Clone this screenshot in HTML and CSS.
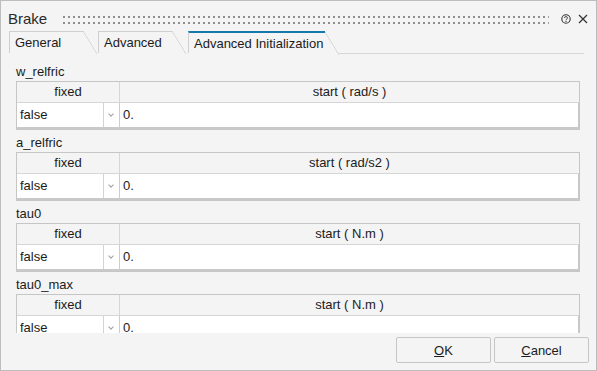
FILE: index.html
```html
<!DOCTYPE html>
<html>
<head lang="en">
<meta charset="UTF-8">
<title>Brake</title>
<link rel="stylesheet" href="styles.css">
</head>
<body>
<div class="dialog">
  <div class="titlebar">
    <span class="title">Brake</span>
    <svg class="grip" height="8">
      <defs>
        <pattern id="dots" width="5" height="6" patternUnits="userSpaceOnUse">
          <rect width="2" height="2" fill="#8e8e8e"/>
        </pattern>
      </defs>
      <rect width="100%" height="8" fill="url(#dots)"/>
    </svg>
    <svg class="help" width="10" height="10" viewBox="0 0 10 10">
      <circle cx="5" cy="5" r="4.2" fill="none" stroke="#333" stroke-width="1.1"/>
      <path d="M3.6 4 a1.4 1.4 0 1 1 2 1.2 c-0.5 0.3 -0.6 0.5 -0.6 1" fill="none" stroke="#333" stroke-width="1"/>
      <circle cx="5" cy="7.4" r="0.6" fill="#333"/>
    </svg>
    <svg class="close" width="10" height="10" viewBox="0 0 10 10">
      <path d="M1 1 L9 9 M9 1 L1 9" stroke="#333" stroke-width="1.2"/>
    </svg>
  </div>

  <div class="tabs">
    <span class="tab">General</span>
    <span class="tab">Advanced</span>
    <span class="tab active">Advanced Initialization</span>
    <span class="tab-fill"></span>
  </div>

  <div class="content">
    <div class="param">
      <div class="param-name">w_relfric</div>
      <div class="param-table">
        <div class="head">fixed</div>
        <div class="head">start ( rad/s )</div>
        <div class="cell select"><span class="value">false</span><span class="arrow"></span></div>
        <div class="cell input">0.</div>
      </div>
    </div>
    <div class="param">
      <div class="param-name">a_relfric</div>
      <div class="param-table">
        <div class="head">fixed</div>
        <div class="head">start ( rad/s2 )</div>
        <div class="cell select"><span class="value">false</span><span class="arrow"></span></div>
        <div class="cell input">0.</div>
      </div>
    </div>
    <div class="param">
      <div class="param-name">tau0</div>
      <div class="param-table">
        <div class="head">fixed</div>
        <div class="head">start ( N.m )</div>
        <div class="cell select"><span class="value">false</span><span class="arrow"></span></div>
        <div class="cell input">0.</div>
      </div>
    </div>
    <div class="param">
      <div class="param-name">tau0_max</div>
      <div class="param-table">
        <div class="head">fixed</div>
        <div class="head">start ( N.m )</div>
        <div class="cell select"><span class="value">false</span><span class="arrow"></span></div>
        <div class="cell input">0.</div>
      </div>
    </div>
  </div>

  <div class="footer">
    <button class="btn"><u>O</u>K</button>
    <button class="btn"><u>C</u>ancel</button>
  </div>
</div>
</body>
</html>
```

FILE: styles.css
```css
body {
  margin: 0;
  font-family: "Liberation Sans", Arial, sans-serif;
  font-size: 13px;
  color: #1b1b1b;
}

.dialog {
  width: 597px;
  height: 371px;
  box-sizing: border-box;
  border: 1px solid #bdbdbd;
  background-color: #f4f4f4;
  display: flex;
  flex-direction: column;
  overflow: hidden;
}

/* title bar */
.titlebar {
  height: 30px;
  box-sizing: border-box;
  padding: 5px 8px 0 7px;
  display: flex;
  align-items: center;
}

.title {
  font-size: 15px;
  color: #2a2a2a;
}

.grip {
  flex: 1;
  margin: 0 12px 0 16px;
  position: relative;
  top: 1px;
}

.help {
  margin-right: 7px;
}

/* tabs */
.tabs {
  height: 23px;
  display: flex;
  padding-left: 8px;
}

.tab {
  position: relative;
  height: 22px;
  line-height: 22px;
  min-width: 74px;
  box-sizing: border-box;
  padding: 0 2px 0 5px;
  margin-right: 15px;
  border-top: 1px solid #cfcfcf;
  border-left: 1px solid #cfcfcf;
  color: #1b1b1b;
}

.tab::after {
  content: "";
  position: absolute;
  top: -1px;
  right: -14px;
  width: 14px;
  height: 23px;
  background: linear-gradient(to top right, transparent calc(50% - 0.6px), #cdcdcd 50%, transparent calc(50% + 0.6px));
}

.tab.active {
  margin-left: 1px;
  margin-right: 14px;
  border-top: 2px solid #1579ad;
  line-height: 21px;
}

.tab.active::after {
  top: -1px;
  height: 23px;
}

.tab-fill {
  flex: 1;
  height: 22px;
  margin-right: 12px;
  border-bottom: 1px solid #d6d6d6;
}

/* parameters */
.content {
  flex: 1;
  overflow: hidden;
  padding: 9px 16px 0 15px;
}

.param {
  margin-bottom: 4px;
}

.param-name {
  line-height: 18px;
  color: #1b1b1b;
}

.param-table {
  display: grid;
  grid-template-columns: 103px 1fr;
  border: 1px solid #c6c6c6;
}

.head {
  height: 20px;
  line-height: 20px;
  text-align: center;
  border-bottom: 1px solid #d6d6d6;
}

.head:first-child {
  border-right: 1px solid #d6d6d6;
}

.cell {
  height: 26px;
  box-sizing: border-box;
  background-color: #fff;
  border-bottom: 2px solid #c9c9c9;
  line-height: 24px;
}

.select {
  display: flex;
  border-right: 1px solid #cdcdcd;
}

.value {
  flex: 1;
  padding-left: 3px;
}

.arrow {
  width: 15px;
  border-left: 1px solid #d3d3d3;
  position: relative;
}

.arrow::before {
  content: "";
  position: absolute;
  left: 5px;
  top: 9px;
  width: 3px;
  height: 3px;
  border-right: 1.5px solid #a0a0a0;
  border-bottom: 1.5px solid #a0a0a0;
  transform: rotate(45deg);
}

.input {
  padding-left: 3px;
  border-right: 1px solid #c9c9c9;
}

/* buttons */
.footer {
  height: 37px;
  box-sizing: border-box;
  padding: 4px 7px 0 0;
  display: flex;
  justify-content: flex-end;
  gap: 3px;
}

.btn {
  width: 95px;
  height: 26px;
  font-family: "Liberation Sans", Arial, sans-serif;
  font-size: 13px;
  color: #1b1b1b;
  background-color: #f4f4f4;
  border: 1px solid #c6c6c6;
  border-radius: 2px;
}
```
